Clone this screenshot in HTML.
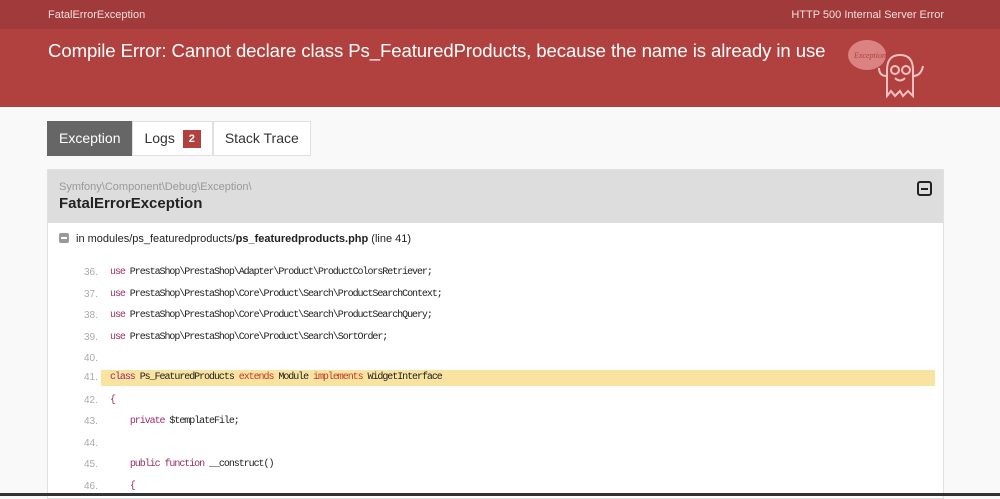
<!DOCTYPE html>
<html><head><meta charset="utf-8"><style>
*{margin:0;padding:0;box-sizing:border-box}
body{width:1000px;height:496px;overflow:hidden;background:#f9f9f9;font-family:"Liberation Sans",sans-serif;color:#222;position:relative}
.top{position:absolute;left:0;top:0;width:1000px;height:29px;background:#a13b3b;color:#f3dede;font-size:11px}
.top .l{position:absolute;left:48px;top:9px}
.top .r{position:absolute;right:56px;top:9px}
.hdr{position:absolute;left:0;top:29px;width:1000px;height:78px;background:#b0413e;color:#fff}
.hdr h1{position:absolute;left:48px;top:11px;font-weight:normal;font-size:18.6px;letter-spacing:-0.1px;white-space:nowrap}
.tabs{position:absolute;left:47px;top:121px;height:35px;display:flex;font-size:14px}
.tab{height:35px;border:1px solid #e0e0e0;background:#fff;padding:0 11px;line-height:33px;color:#333}
.tab.a{background:#666;color:#fff;border-color:#666}
.badge{display:inline-block;background:#b0413e;color:#fff;font-size:11px;font-weight:bold;width:18px;height:18px;line-height:18px;text-align:center;margin-left:8px;vertical-align:1px}
.panel{position:absolute;left:47px;top:169px;width:897px;height:330px;background:#fff;border:1px solid #e0e0e0}
.ph{height:53px;background:#ddd;position:relative}
.ph .ns{position:absolute;left:11px;top:11px;font-size:11px;color:#999}
.ph .cl{position:absolute;left:11px;top:25px;font-size:15px;font-weight:bold;color:#222}
.tog{position:absolute;right:11px;top:11px;width:15px;height:15px;border:2px solid #222;border-radius:3px}
.tog:after{content:"";position:absolute;left:2px;top:4.5px;width:7px;height:2px;background:#222}
.loc{position:absolute;left:11px;top:63px;font-size:11px;color:#222}
.loc .m{display:inline-block;width:10px;height:10px;background:#999;border-radius:2px;margin-right:7px;vertical-align:-1px;position:relative}
.loc .m:after{content:"";position:absolute;left:2px;top:4px;width:6px;height:2px;background:#fff}
.code{position:absolute;left:0;top:93px;width:100%;font-family:"Liberation Mono",monospace;font-size:10px;letter-spacing:-1.05px;color:#222}
.ln{position:absolute;left:53px;width:834px;height:16px;line-height:16px;white-space:pre}
.ln .n{position:absolute;left:-17px;font-family:"Liberation Sans",sans-serif;font-size:10px;letter-spacing:0;color:#aaa}
.ln .c{position:absolute;left:9px}
.hl{background:#f8e3a1}
.k{color:#9b2d6a}.x{color:#c0392b}
.bot{position:absolute;left:0;top:493px;width:1000px;height:3px;background:#333}
</style></head><body>
<div class="top"><span class="l">FatalErrorException</span><span class="r">HTTP 500 Internal Server Error</span></div>
<div class="hdr"><h1>Compile Error: Cannot declare class Ps_FeaturedProducts, because the name is already in use</h1>
<svg style="position:absolute;left:845px;top:9px" width="100" height="60" viewBox="0 0 100 60">
<ellipse cx="22" cy="17" rx="19" ry="15" fill="#e89a9a" opacity=".75"/>
<text x="9" y="20" font-size="8" font-style="italic" fill="#b0413e" font-family="Liberation Serif,serif">Exception!</text>
<path d="M42 58 L42 32 Q42 17 55 17 Q68 17 68 32 L68 58 L63 53 L58 58 L55 53 L50 58 L46 53 Z" fill="none" stroke="#f0c0c0" stroke-width="2"/>
<circle cx="50" cy="32" r="4" fill="none" stroke="#f0c0c0" stroke-width="2"/><circle cx="61" cy="32" r="4" fill="none" stroke="#f0c0c0" stroke-width="2"/>
<path d="M50 40 Q55 45 60 40 M42 38 Q34 38 34 30 M68 38 Q76 38 78 28" fill="none" stroke="#f0c0c0" stroke-width="2"/>
</svg></div>
<div class="tabs"><div class="tab a">Exception</div><div class="tab">Logs<span class="badge">2</span></div><div class="tab">Stack Trace</div></div>
<div class="panel">
<div class="ph"><span class="ns">Symfony\Component\Debug\Exception\</span><span class="cl">FatalErrorException</span><div class="tog"></div></div>
<div class="loc"><span class="m"></span>in modules/ps_featuredproducts/<b>ps_featuredproducts.php</b> (line 41)</div>
<div class="code">
<div class="ln" style="top:2px"><span class="n">36.</span><span class="c"><span class="k">use</span> PrestaShop\PrestaShop\Adapter\Product\ProductColorsRetriever;</span></div>
<div class="ln" style="top:24px"><span class="n">37.</span><span class="c"><span class="k">use</span> PrestaShop\PrestaShop\Core\Product\Search\ProductSearchContext;</span></div>
<div class="ln" style="top:45px"><span class="n">38.</span><span class="c"><span class="k">use</span> PrestaShop\PrestaShop\Core\Product\Search\ProductSearchQuery;</span></div>
<div class="ln" style="top:67px"><span class="n">39.</span><span class="c"><span class="k">use</span> PrestaShop\PrestaShop\Core\Product\Search\SortOrder;</span></div>
<div class="ln" style="top:88px"><span class="n">40.</span></div>
<div class="ln hl" style="top:107px"><span class="n">41.</span><span class="c"><span class="k">class</span> Ps_FeaturedProducts <span class="x">extends</span> Module <span class="x">implements</span> WidgetInterface</span></div>
<div class="ln" style="top:130px"><span class="n">42.</span><span class="c"><span class="k">{</span></span></div>
<div class="ln" style="top:151px"><span class="n">43.</span><span class="c">    <span class="k">private</span> $templateFile;</span></div>
<div class="ln" style="top:173px"><span class="n">44.</span></div>
<div class="ln" style="top:194px"><span class="n">45.</span><span class="c">    <span class="k">public function</span> __construct()</span></div>
<div class="ln" style="top:216px"><span class="n">46.</span><span class="c">    <span class="k">{</span></span></div>
</div></div>
<div class="bot"></div>
</body></html>
